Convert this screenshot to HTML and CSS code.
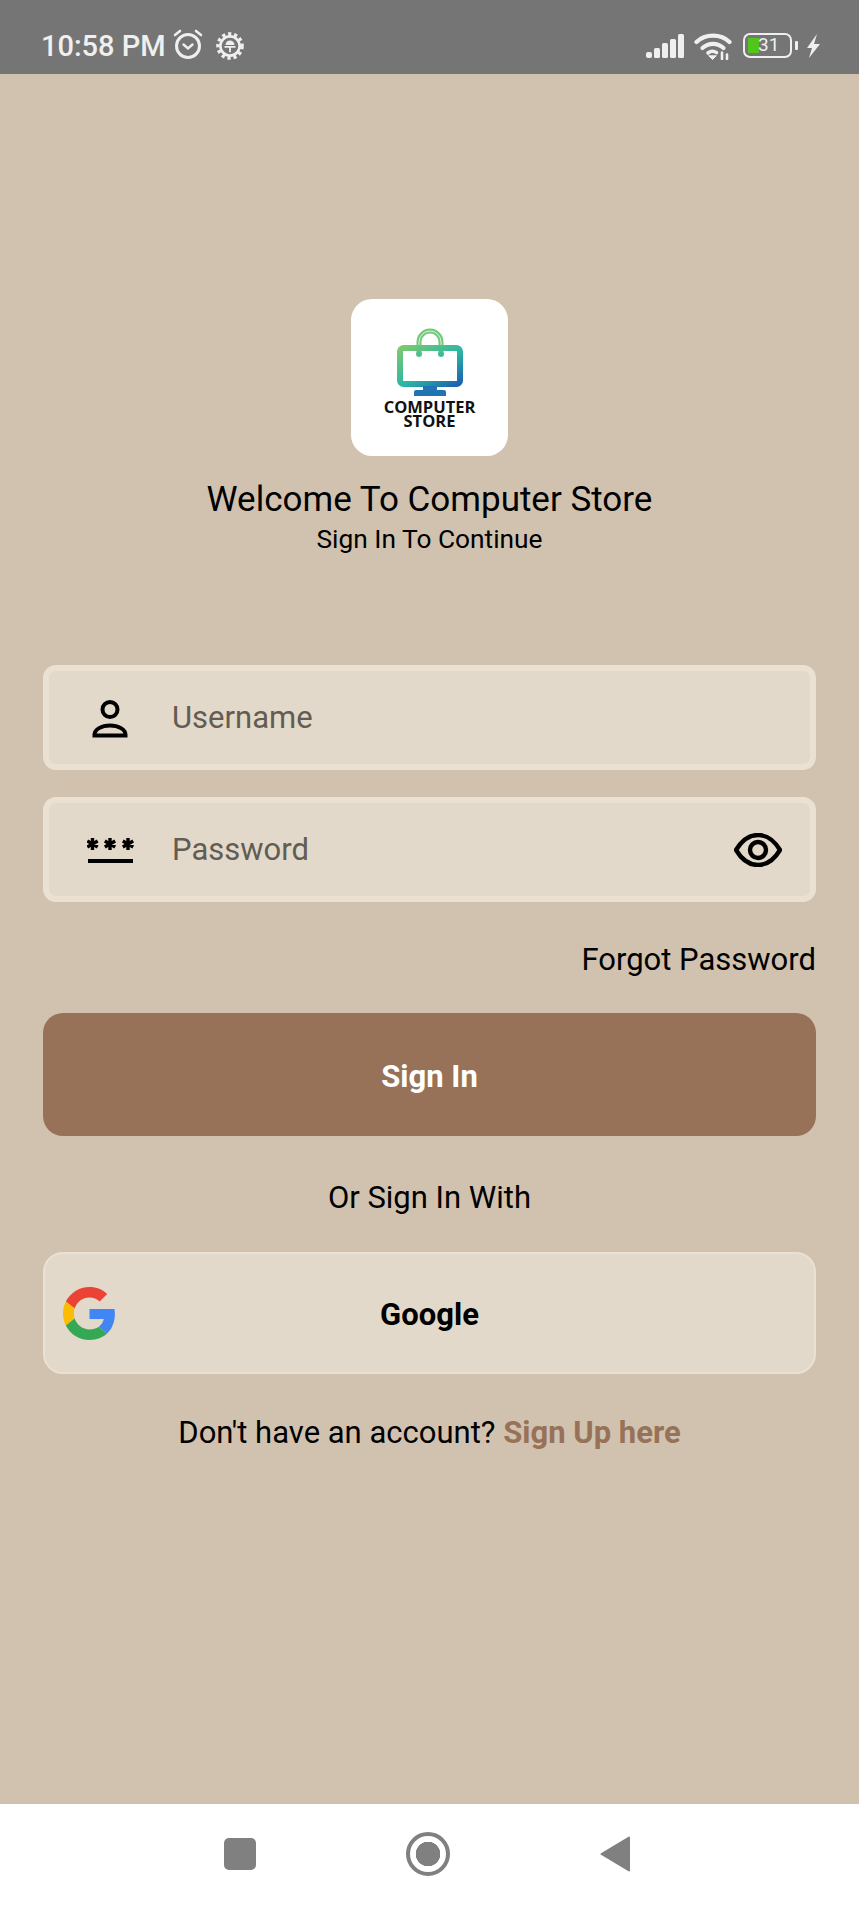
FILE: index.html
```html
<!DOCTYPE html>
<html lang="en">
<head>
	<meta charset="UTF-8">
	<meta name="viewport" content="width=device-width, initial-scale=1">
	<title>Computer Store - Sign In</title>
	<link rel="stylesheet" href="styles.css">
</head>
<body>
	<header class="status-bar">
		<div class="status-left">
			<span class="clock">10:58 PM</span>
			<svg class="alarm-icon" viewBox="0 0 32 32" fill="none" stroke="currentColor" stroke-linecap="round">
				<circle cx="16" cy="18" r="11.5" stroke-width="3"/>
				<path d="M3 7l5-4M29 7l-5-4" stroke-width="2.6"/>
				<path d="M11.5 16.5l4.5 4 4.5-4" stroke-width="2.4"/>
			</svg>
			<svg class="gear-icon" viewBox="0 0 28 28" fill="none" stroke="currentColor">
				<circle cx="14" cy="14" r="12" stroke-width="3.6" stroke-dasharray="3.2 2.83"/>
				<circle cx="14" cy="14" r="9.6" stroke-width="2.6"/>
				<path d="M8.500 14.800h11M14 14.800v5.500" stroke-width="1.800"/>
				<path d="M9.500 13a4.500 4.500 0 0 1 9 0z" fill="currentColor" stroke="none"/>
			</svg>
		</div>
		<div class="status-right">
			<svg class="signal-icon" viewBox="0 0 38 24" fill="currentColor">
				<rect x="0" y="18" width="6" height="6" rx="2"/>
				<rect x="8" y="14" width="6" height="10" rx="1.5"/>
				<rect x="16" y="9" width="6" height="15" rx="1.5"/>
				<rect x="24" y="5" width="6" height="19" rx="1.5"/>
				<rect x="32" y="0" width="6" height="24" rx="1.5"/>
			</svg>
			<svg class="wifi-icon" viewBox="0 0 38 28" fill="none" stroke="currentColor" stroke-width="4.200" stroke-linecap="round">
				<path d="M2.500 10C11 1.500 27 1.500 35.500 10"/>
				<path d="M8.500 16c6-5.500 15-5.500 21 0"/>
				<path d="M14 21c2.500-2 6-2 8.500-.5" stroke-width="3.600"/>
				<path d="M15 24l3.500 3.500 3.500-3.500z" fill="currentColor" stroke-width="1"/>
				<path d="M28 20.500v6.500M33 22.500v4.500" stroke-width="2.600"/>
			</svg>
			<div class="battery">
				<span class="battery-fill"></span>
				<span class="battery-level">31</span>
			</div>
			<span class="battery-nub"></span>
			<svg class="bolt-icon" viewBox="0 0 15 24" fill="currentColor"><path d="M11 0L1 14h5l-3 10 11-14H8z"/></svg>
		</div>
	</header>

	<main class="login">
		<div class="logo">
			<svg class="logo-mark" viewBox="0 0 66 68" fill="none">
				<defs>
					<linearGradient id="screen" x1="0" y1="0" x2="1" y2="1">
						<stop offset="0" stop-color="#7cc96f"/>
						<stop offset="0.55" stop-color="#2bb5a5"/>
						<stop offset="1" stop-color="#1b62ae"/>
					</linearGradient>
				</defs>
				<path d="M22 24V14a11 11 0 0 1 22 0v10" stroke="#72c97c" stroke-width="5"/>
				<path d="M22 24V14a11 11 0 0 1 22 0v10" stroke="#d9f1da" stroke-width="1"/>
				<rect x="3" y="20" width="60" height="36" rx="3.500" stroke="url(#screen)" stroke-width="6"/>
				<circle cx="22" cy="26" r="3" fill="#4fc08d"/>
				<circle cx="44" cy="26" r="3" fill="#3cbd95"/>
				<path d="M26 58h14v4h7a2 2 0 0 1 2 2v4H17v-4a2 2 0 0 1 2-2h7z" fill="#1f74b4"/>
			</svg>
			<div class="logo-name">COMPUTER<br>STORE</div>
		</div>
		<h1 class="title">Welcome To Computer Store</h1>
		<p class="subtitle">Sign In To Continue</p>

		<form class="form">
			<div class="field">
				<svg class="field-icon" viewBox="0 0 48 48" fill="none" stroke="#000" stroke-width="4">
					<circle cx="23" cy="15.500" r="7.500"/>
					<path d="M7.500 41.500v-1c0-5 7-9 15.500-9s15.500 4 15.500 9v1z"/>
				</svg>
				<span class="placeholder">Username</span>
			</div>
			<div class="field">
				<svg class="field-icon" viewBox="0 0 48 48" fill="none" stroke="#000">
					<path d="M5.500 12v12M0.300 15l10.400 6M10.700 15l-10.400 6M23 12v12M17.800 15l10.400 6M28.200 15l-10.400 6M41 12v12M35.800 15l10.400 6M46.200 15l-10.400 6" stroke-width="3.400"/>
					<path d="M1 35h45" stroke-width="4"/>
				</svg>
				<span class="placeholder">Password</span>
				<svg class="eye-icon" viewBox="0 0 48 34" fill="none" stroke="#000" stroke-width="4.400">
					<path d="M2 17C8 7 15 2 24 2s16 5 22 15c-6 10-13 15-22 15S8 27 2 17z"/>
					<circle cx="24" cy="17" r="8"/>
				</svg>
			</div>
			<a class="forgot">Forgot Password</a>
			<button class="btn btn-primary" type="button">Sign In</button>
			<p class="or">Or Sign In With</p>
			<button class="btn btn-google" type="button">
				<svg class="google-icon" viewBox="0 0 48 48">
					<path fill="#EA4335" d="M24 9.500c3.540 0 6.710 1.220 9.210 3.600l6.850-6.850C35.900 2.380 30.470 0 24 0 14.620 0 6.510 5.380 2.560 13.220l7.980 6.190C12.430 13.720 17.740 9.500 24 9.500z"/>
					<path fill="#4285F4" d="M46.980 24.550c0-1.570-.15-3.090-.38-4.550H24v9.020h12.940c-.58 2.960-2.260 5.480-4.780 7.180l7.730 6c4.510-4.180 7.090-10.360 7.090-17.650z"/>
					<path fill="#FBBC05" d="M10.530 28.590c-.48-1.450-.76-2.990-.76-4.590s.27-3.140.76-4.590l-7.980-6.190C.92 16.460 0 20.120 0 24c0 3.880.92 7.540 2.560 10.780l7.970-6.190z"/>
					<path fill="#34A853" d="M24 48c6.480 0 11.930-2.130 15.890-5.810l-7.730-6c-2.150 1.450-4.920 2.300-8.160 2.300-6.260 0-11.570-4.220-13.470-9.910l-7.980 6.190C6.510 42.620 14.620 48 24 48z"/>
				</svg>
				Google
			</button>
			<p class="signup">Don't have an account? <a class="signup-link">Sign Up here</a></p>
		</form>
	</main>

	<nav class="nav-bar">
		<span class="nav-square"></span>
		<span class="nav-home"></span>
		<svg class="nav-back" viewBox="0 0 30 36" fill="#808080" stroke="#808080" stroke-width="2" stroke-linejoin="round"><path d="M29 1.500v33L1.500 18z"/></svg>
	</nav>
</body>
</html>
```

FILE: styles.css
```css
* {
	box-sizing: border-box;
}

html, body {
	margin: 0;
	padding: 0;
}

body {
	width: 859px;
	height: 1908px;
	display: flex;
	flex-direction: column;
	font-family: Roboto, "Liberation Sans", sans-serif;
	background: #d1c2af;
	color: #000;
	overflow: hidden;
}

/* status bar */
.status-bar {
	height: 74px;
	flex: none;
	display: flex;
	justify-content: space-between;
	align-items: center;
	padding: 17px 38px 0 41px;
	background: #757575;
	color: #efefef;
}

.status-left,
.status-right {
	display: flex;
	align-items: center;
}

.clock {
	font-size: 29px;
	font-weight: 500;
	line-height: 34px;
}

.alarm-icon {
	width: 32px;
	height: 32px;
	margin: -4px 0 0 6px;
}

.gear-icon {
	width: 28px;
	height: 28px;
	margin: 0 0 0 12px;
}

.signal-icon {
	width: 38px;
	height: 24px;
}

.wifi-icon {
	width: 38px;
	height: 28px;
	margin-left: 10px;
}

.battery {
	position: relative;
	width: 49px;
	height: 25px;
	margin-left: 11px;
	border: 2.5px solid #efefef;
	border-radius: 7px;
	font-size: 19px;
	line-height: 20px;
}

.battery-fill {
	position: absolute;
	left: 3px;
	top: 3px;
	bottom: 3px;
	width: 11px;
	background: #52c41a;
}

.battery-level {
	position: absolute;
	left: 13px;
	top: 0;
}

.battery-nub {
	width: 3px;
	height: 9px;
	margin-left: 3px;
	background: #efefef;
	border-radius: 1px;
}

.bolt-icon {
	width: 15px;
	height: 24px;
	margin-left: 8px;
}

/* login */
.login {
	flex: 1;
	display: flex;
	flex-direction: column;
	align-items: center;
	padding: 225px 43px 0;
}

.logo {
	width: 157px;
	height: 157px;
	display: flex;
	flex-direction: column;
	align-items: center;
	padding-top: 29px;
	background: #fff;
	border-radius: 21px;
}

.logo-mark {
	width: 66px;
	height: 68px;
	flex: none;
}

.logo-name {
	margin-top: 4px;
	font-family: "Open Sans", sans-serif;
	font-weight: 700;
	font-size: 16.5px;
	line-height: 14px;
	text-align: center;
	color: #111;
}

.title {
	margin: 24px 0 0;
	font-size: 35px;
	font-weight: 400;
	line-height: 40px;
}

.subtitle {
	margin: 3px 0 0;
	font-size: 26.3px;
	line-height: 32px;
}

.form {
	width: 100%;
	margin-top: 110px;
	display: flex;
	flex-direction: column;
}

.field {
	height: 105px;
	display: flex;
	align-items: center;
	margin-bottom: 27px;
	padding: 0 28px 0 38px;
	background: #e2d9ca;
	border: 6px solid #eae1d3;
	border-radius: 13px;
}

.field-icon {
	width: 48px;
	height: 48px;
	flex: none;
}

.placeholder {
	flex: 1;
	margin-left: 37px;
	font-size: 31px;
	color: #635c52;
}

.eye-icon {
	width: 48px;
	height: 34px;
	flex: none;
}

.forgot {
	margin-top: 13px;
	align-self: flex-end;
	font-size: 31px;
	line-height: 36px;
}

.btn {
	display: block;
	position: relative;
	width: 100%;
	padding: 3px 0 0;
	font-family: inherit;
	font-size: 31px;
	font-weight: 700;
}

.btn-primary {
	height: 123px;
	margin-top: 35px;
	background: #977259;
	border: 0;
	border-radius: 20px;
	color: #fff;
}

.or {
	margin: 44px 0 0;
	font-size: 31px;
	line-height: 36px;
	text-align: center;
}

.btn-google {
	height: 122px;
	margin-top: 36px;
	background: #e2d9ca;
	border: 2px solid #eae1d3;
	border-radius: 20px;
	color: #000;
}

.google-icon {
	position: absolute;
	left: 18px;
	top: 33px;
	width: 53px;
	height: 53px;
}

.signup {
	margin: 41px 0 0;
	font-size: 31px;
	line-height: 36px;
	text-align: center;
}

.signup-link {
	font-weight: 700;
	color: #977259;
}

/* android nav */
.nav-bar {
	height: 104px;
	flex: none;
	display: flex;
	align-items: center;
	justify-content: center;
	padding: 0 5px 5px 0;
	background: #fff;
}

.nav-square {
	width: 32px;
	height: 32px;
	background: #808080;
	border-radius: 5px;
}

.nav-home {
	width: 44px;
	height: 44px;
	margin-left: 150px;
	border: 4px solid #808080;
	border-radius: 50%;
	background: radial-gradient(circle, #808080 0 12px, #fff 12.5px);
}

.nav-back {
	width: 30px;
	height: 36px;
	margin-left: 150px;
}
```
